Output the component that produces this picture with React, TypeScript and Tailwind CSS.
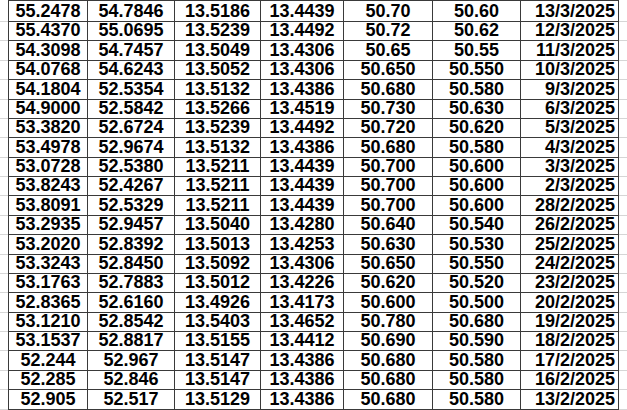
const rows: string[][] = [
  ["55.2478", "54.7846", "13.5186", "13.4439", "50.70", "50.60", "13/3/2025"],
  ["55.4370", "55.0695", "13.5239", "13.4492", "50.72", "50.62", "12/3/2025"],
  ["54.3098", "54.7457", "13.5049", "13.4306", "50.65", "50.55", "11/3/2025"],
  ["54.0768", "54.6243", "13.5052", "13.4306", "50.650", "50.550", "10/3/2025"],
  ["54.1804", "52.5354", "13.5132", "13.4386", "50.680", "50.580", "9/3/2025"],
  ["54.9000", "52.5842", "13.5266", "13.4519", "50.730", "50.630", "6/3/2025"],
  ["53.3820", "52.6724", "13.5239", "13.4492", "50.720", "50.620", "5/3/2025"],
  ["53.4978", "52.9674", "13.5132", "13.4386", "50.680", "50.580", "4/3/2025"],
  ["53.0728", "52.5380", "13.5211", "13.4439", "50.700", "50.600", "3/3/2025"],
  ["53.8243", "52.4267", "13.5211", "13.4439", "50.700", "50.600", "2/3/2025"],
  ["53.8091", "52.5329", "13.5211", "13.4439", "50.700", "50.600", "28/2/2025"],
  ["53.2935", "52.9457", "13.5040", "13.4280", "50.640", "50.540", "26/2/2025"],
  ["53.2020", "52.8392", "13.5013", "13.4253", "50.630", "50.530", "25/2/2025"],
  ["53.3243", "52.8450", "13.5092", "13.4306", "50.650", "50.550", "24/2/2025"],
  ["53.1763", "52.7883", "13.5012", "13.4226", "50.620", "50.520", "23/2/2025"],
  ["52.8365", "52.6160", "13.4926", "13.4173", "50.600", "50.500", "20/2/2025"],
  ["53.1210", "52.8542", "13.5403", "13.4652", "50.780", "50.680", "19/2/2025"],
  ["53.1537", "52.8817", "13.5155", "13.4412", "50.690", "50.590", "18/2/2025"],
  ["52.244", "52.967", "13.5147", "13.4386", "50.680", "50.580", "17/2/2025"],
  ["52.285", "52.846", "13.5147", "13.4386", "50.680", "50.580", "16/2/2025"],
  ["52.905", "52.517", "13.5129", "13.4386", "50.680", "50.580", "13/2/2025"],
];

const App = () => {
  return (
    <div className="w-[627px] h-[410px] overflow-hidden bg-white font-['Liberation_Sans',Arial,sans-serif] font-bold text-[18px] text-black">
      <div className="border-t-[1.5px] border-[#3a3a3a] ml-[8px] w-[611px]"></div>
      {rows.map((r, i) => (
        <div
          key={i}
          className="grid grid-cols-[8px_79px_87px_86px_83px_89px_88px_99px_8px] h-[19.38px]"
        >
          <div className="border-b border-[#d6d6d6]"></div>
          {r.map((v, j) => (
            <div
              key={j}
              className={
                j === 6
                  ? "border-x-[1.5px] border-b-[1.5px] border-[#3a3a3a] text-right pr-[3px] leading-[19px] pt-[1px] whitespace-nowrap"
                  : j === 0
                  ? "border-l-[1.5px] border-b-[1.5px] border-[#3a3a3a] text-center leading-[19px] pt-[1px] whitespace-nowrap"
                  : "border-l-[1.5px] border-b-[1.5px] border-[#3a3a3a] text-center leading-[19px] pt-[1px] whitespace-nowrap"
              }
            >
              {v}
            </div>
          ))}
          <div className="border-b border-[#d6d6d6]"></div>
        </div>
      ))}
    </div>
  );
};

export default App;
